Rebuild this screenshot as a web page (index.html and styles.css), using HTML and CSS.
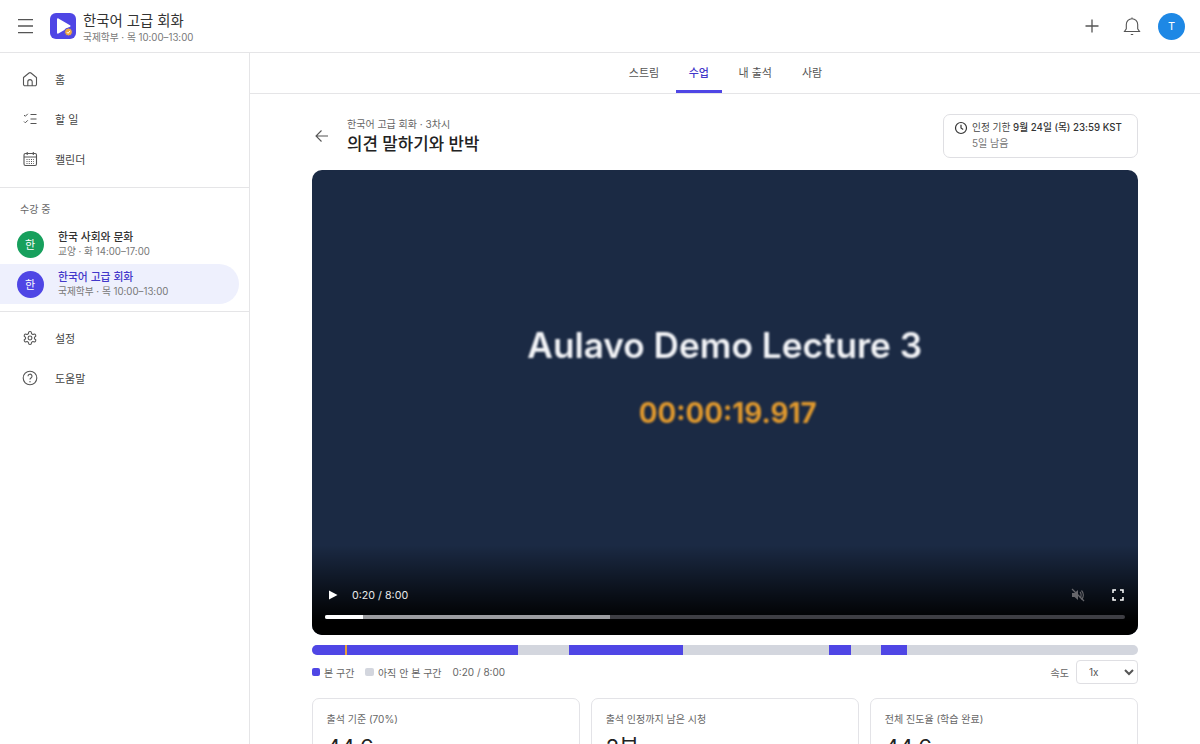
FILE: index.html
```html
<!DOCTYPE html>
<html lang="ko">
<head>
    <meta charset="UTF-8">
    <meta name="viewport" content="width=device-width, initial-scale=1.0">
    <title>의견 말하기와 반박</title>
    <link rel="stylesheet" href="styles.css">
</head>
<body>
    <header class="topbar">
        <button class="menu-btn" aria-label="메뉴">
            <svg width="24" height="24" viewBox="0 0 24 24" fill="none" stroke="#555" stroke-width="1.3"><path d="M5 5.600h15M5 12h15M5 18.600h15"/></svg>
        </button>
        <div class="logo">
            <svg width="26" height="26" viewBox="0 0 26 26">
                <rect width="26" height="26" rx="6" fill="#4f46e5"/>
                <path d="M7 6.200c0-.8.700-1.200 1.400-.8l11.600 6.800c.7.400.7 1.200 0 1.600L8.400 20.600c-.7.400-1.400 0-1.400-.8z" fill="#fff"/>
                <circle cx="18.500" cy="19" r="4" fill="#f0a93c" stroke="#4f46e5" stroke-width="1"/>
                <path d="m16.800 19.100 1.200 1.200 2.100-2.400" fill="none" stroke="#fff" stroke-width="1"/>
            </svg>
        </div>
        <div class="course-title">
            <div class="course-name">한국어 고급 회화</div>
            <div class="course-meta">국제학부 · 목 10:00–13:00</div>
        </div>
        <div class="top-actions">
            <svg width="24" height="24" viewBox="0 0 24 24" fill="none" stroke="#555" stroke-width="1.300"><path d="M12 5.500v13M5.500 12h13"/></svg>
            <svg width="24" height="24" viewBox="0 0 24 24" fill="none" stroke="#555" stroke-width="1.100"><path d="M4.500 17.500h15l-1.800-2.600v-4.400a5.700 5.700 0 0 0-11.400 0v4.400zM12 3.500v1.300M10.800 20.500h2.400"/></svg>
            <div class="avatar">T</div>
        </div>
    </header>

    <div class="layout">
        <nav class="sidebar">
            <div class="nav-group">
                <a class="nav-item">
                    <svg width="18" height="18" viewBox="0 0 18 18" fill="none" stroke="#555" stroke-width="1.100"><path d="M2.500 7.500 8 3a1.600 1.600 0 0 1 2 0l5.500 4.500v6.800a1.500 1.500 0 0 1-1.500 1.500H4a1.500 1.500 0 0 1-1.500-1.500zM6.800 15.800v-4a2.200 2.200 0 0 1 4.400 0v4"/></svg>
                    <span>홈</span>
                </a>
                <a class="nav-item">
                    <svg width="18" height="18" viewBox="0 0 18 18" fill="none" stroke="#555" stroke-width="1"><path d="m3 5 1.300 1.300L6.800 3.800M3 11.500l1.300 1.300 2.500-2.500M9.500 4.500h6M9.500 9h6M9.500 13.500h6"/></svg>
                    <span>할 일</span>
                </a>
                <a class="nav-item">
                    <svg width="18" height="18" viewBox="0 0 18 18" fill="none" stroke="#555" stroke-width="1.100"><rect x="3" y="3.500" width="12.500" height="12" rx="1.500"/><path d="M3 7h12.500M6.200 2v3M12.300 2v3"/><path d="M5.500 9.500h7.500M5.500 11.500h7.500M5.500 13.500h7.500" stroke-dasharray="1 1.250"/></svg>
                    <span>캘린더</span>
                </a>
            </div>
            <div class="nav-group enrolled">
                <div class="nav-label">수강 중</div>
                <a class="course-item">
                    <span class="course-badge badge-green">한</span>
                    <span class="course-text">
                        <b>한국 사회와 문화</b>
                        <small>교양 · 화 14:00–17:00</small>
                    </span>
                </a>
                <a class="course-item active">
                    <span class="course-badge badge-indigo">한</span>
                    <span class="course-text">
                        <b>한국어 고급 회화</b>
                        <small>국제학부 · 목 10:00–13:00</small>
                    </span>
                </a>
            </div>
            <div class="nav-group last">
                <a class="nav-item">
                    <svg width="18" height="18" viewBox="-2 -2 28 28" fill="none" stroke="#555" stroke-width="1.700"><circle cx="12" cy="12" r="3"/><path d="M12.220 2h-.44a2 2 0 0 0-2 2v.18a2 2 0 0 1-1 1.730l-.43.250a2 2 0 0 1-2 0l-.15-.08a2 2 0 0 0-2.730.730l-.22.380a2 2 0 0 0 .730 2.730l.15.100a2 2 0 0 1 1 1.720v.510a2 2 0 0 1-1 1.740l-.15.090a2 2 0 0 0-.730 2.730l.22.380a2 2 0 0 0 2.730.730l.15-.08a2 2 0 0 1 2 0l.43.250a2 2 0 0 1 1 1.730V20a2 2 0 0 0 2 2h.44a2 2 0 0 0 2-2v-.18a2 2 0 0 1 1-1.730l.43-.25a2 2 0 0 1 2 0l.15.08a2 2 0 0 0 2.730-.730l.22-.39a2 2 0 0 0-.730-2.730l-.15-.08a2 2 0 0 1-1-1.740v-.5a2 2 0 0 1 1-1.740l.15-.09a2 2 0 0 0 .730-2.730l-.22-.38a2 2 0 0 0-2.730-.730l-.15.08a2 2 0 0 1-2 0l-.43-.25a2 2 0 0 1-1-1.730V4a2 2 0 0 0-2-2z"/></svg>
                    <span>설정</span>
                </a>
                <a class="nav-item">
                    <svg width="18" height="18" viewBox="0 0 18 18" fill="none" stroke="#555" stroke-width="1.100"><circle cx="9" cy="9" r="6.800"/><path d="M7 7.200a2 2 0 1 1 3 1.700c-.7.400-1 .8-1 1.500"/><circle cx="9" cy="12.700" r=".7" fill="#555" stroke="none"/></svg>
                    <span>도움말</span>
                </a>
            </div>
        </nav>

        <div class="content">
            <div class="tabs">
                <a class="tab">스트림</a>
                <a class="tab tab-active">수업</a>
                <a class="tab">내 출석</a>
                <a class="tab">사람</a>
            </div>

            <main class="lesson">
                <div class="lesson-head">
                    <button class="back-btn" aria-label="뒤로">
                        <svg width="20" height="20" viewBox="0 0 20 20" fill="none" stroke="#555" stroke-width="1.100"><path d="M16 10H4M9.500 4.500 4 10l5.500 5.500"/></svg>
                    </button>
                    <div class="lesson-title">
                        <div class="crumb">한국어 고급 회화 · 3차시</div>
                        <h1>의견 말하기와 반박</h1>
                    </div>
                    <div class="deadline">
                        <div class="deadline-row">
                            <svg width="14" height="14" viewBox="0 0 14 14" fill="none" stroke="#333" stroke-width="1.200"><circle cx="7" cy="7" r="5.500"/><path d="M7 3.800V7l2.200 1.400"/></svg>
                            <span>인정 기한 <b>9월 24일 (목) 23:59 KST</b></span>
                        </div>
                        <div class="deadline-left">5일 남음</div>
                    </div>
                </div>

                <div class="video">
                    <div class="video-frame">
                        <div class="video-title">Aulavo Demo Lecture 3</div>
                        <div class="video-time">00:00:19.917</div>
                    </div>
                    <div class="video-controls">
                        <div class="control-row">
                            <svg width="12" height="12" viewBox="0 0 12 12"><path d="M2 1.500l8.500 4.500L2 10.500z" fill="#fff"/></svg>
                            <span class="control-time">0:20 / 8:00</span>
                            <svg class="mute-icon" width="16" height="16" viewBox="0 0 16 16" fill="#66666b"><path d="M2 6h2.500L8 3v10l-3.500-3H2z"/><path d="M10 5c1.500 1.500 1.500 4.500 0 6M11.500 3.500c2.500 2.500 2.500 6.500 0 9" fill="none" stroke="#66666b" stroke-width="1.100"/><path d="M2 2l12 12" stroke="#66666b" stroke-width="1.200"/></svg>
                            <svg class="full-icon" width="12" height="12" viewBox="0 0 12 12" fill="none" stroke="#fff" stroke-width="1.500"><path d="M1 4V1h3M8 1h3v3M11 8v3H8M4 11H1V8"/></svg>
                        </div>
                        <div class="timeline">
                            <div class="timeline-buffer" style="width: 35.7%"></div>
                            <div class="timeline-played" style="width: 4.7%"></div>
                        </div>
                    </div>
                </div>

                <div class="segments">
                    <div class="segment" style="left: 0; width: 24.95%"></div>
                    <div class="segment" style="left: 31.2%; width: 13.7%"></div>
                    <div class="segment" style="left: 62.6%; width: 2.65%"></div>
                    <div class="segment" style="left: 68.85%; width: 3.25%"></div>
                    <div class="marker" style="left: 4.05%"></div>
                </div>

                <div class="legend">
                    <span class="legend-item"><i class="swatch swatch-seen"></i>본 구간</span>
                    <span class="legend-item"><i class="swatch swatch-unseen"></i>아직 안 본 구간</span>
                    <span class="legend-time">0:20 / 8:00</span>
                    <label class="speed">속도
                        <select class="speed-select"><option>1x</option></select>
                    </label>
                </div>

                <div class="stats">
                    <div class="stat-card">
                        <div class="stat-label">출석 기준 (70%)</div>
                        <div class="stat-value">44.6</div>
                    </div>
                    <div class="stat-card">
                        <div class="stat-label">출석 인정까지 남은 시청</div>
                        <div class="stat-value">2분</div>
                    </div>
                    <div class="stat-card">
                        <div class="stat-label">전체 진도율 (학습 완료)</div>
                        <div class="stat-value">44.6</div>
                    </div>
                </div>
            </main>
        </div>
    </div>
</body>
</html>
```

FILE: styles.css
```css
* {
    box-sizing: border-box;
}

html, body {
    height: 100%;
}

body {
    margin: 0;
    overflow: hidden;
    font-family: Inter, "Noto Sans CJK KR", sans-serif;
    color: #222;
    background-color: #fff;
}

button {
    padding: 0;
    border: none;
    background: none;
    display: flex;
}

/* top bar */
.topbar {
    height: 53px;
    display: flex;
    align-items: center;
    padding: 0 15px 0 13px;
    border-bottom: 1px solid #e5e5e7;
}

.logo {
    display: flex;
    margin-left: 13px;
}

.course-title {
    margin-left: 7px;
    padding-top: 3px;
}

.course-name {
    font-size: 14.400px;
    line-height: 20px;
    color: #333;
}

.course-meta {
    font-size: 9.700px;
    line-height: 14px;
    color: #777;
}

.top-actions {
    margin-left: auto;
    display: flex;
    align-items: center;
    gap: 16px;
}

.avatar {
    width: 27px;
    height: 27px;
    border-radius: 50%;
    margin-left: -2px;
    background-color: #1e88e5;
    color: #fff;
    font-size: 11px;
    display: flex;
    align-items: center;
    justify-content: center;
}

.layout {
    display: flex;
    height: calc(100% - 53px);
}

/* sidebar */
.sidebar {
    width: 250px;
    flex-shrink: 0;
    border-right: 1px solid #e5e5e7;
}

.nav-group {
    padding: 6px 0 8px;
    border-bottom: 1px solid #e5e5e7;
}

.nav-group.last {
    padding-top: 6px;
    border-bottom: none;
}

.nav-item {
    height: 40px;
    display: flex;
    align-items: center;
    gap: 16px;
    padding-left: 21px;
    font-size: 11px;
    color: #444;
}

.nav-group.enrolled {
    padding: 13px 10px 7px 0;
}

.nav-label {
    padding-left: 20px;
    font-size: 10px;
    line-height: 16px;
    color: #666;
    margin-bottom: 7px;
}

.course-item {
    height: 40px;
    display: flex;
    align-items: center;
    gap: 14.500px;
    padding-left: 16.500px;
    border-radius: 0 20px 20px 0;
}

.course-item.active {
    background-color: #eef0fd;
}

.course-badge {
    width: 27px;
    height: 27px;
    border-radius: 50%;
    color: #fff;
    font-size: 11px;
    display: flex;
    align-items: center;
    justify-content: center;
}

.badge-green {
    background-color: #17a05d;
}

.badge-indigo {
    background-color: #4f46e5;
}

.course-text {
    display: flex;
    flex-direction: column;
}

.course-text b {
    font-size: 10.800px;
    font-weight: 500;
    line-height: 15px;
    color: #333;
}

.course-text small {
    font-size: 9.700px;
    line-height: 13px;
    color: #777;
}

.active .course-text b {
    color: #4338ca;
}

/* main column */
.content {
    flex: 1;
    min-width: 0;
}

.tabs {
    height: 41px;
    display: flex;
    justify-content: center;
    padding-left: 1px;
    border-bottom: 1px solid #e5e5e7;
}

.tab {
    display: flex;
    align-items: center;
    padding: 0 15px 3px;
    height: 40px;
    font-size: 11px;
    color: #555;
}

.tab-active {
    color: #4338ca;
    font-weight: 500;
    padding: 0 13px;
    margin: 0 1.500px;
    border-bottom: 3px solid #4f46e5;
}

.lesson {
    padding: 20px 62px 0 61.500px;
}

.lesson-head {
    display: flex;
    align-items: center;
    height: 44px;
    margin-bottom: 12px;
}

.lesson-title {
    margin-left: 15.500px;
    padding-top: 2px;
}

.crumb {
    font-size: 10px;
    line-height: 14px;
    color: #666;
}

h1 {
    margin: 0;
    font-size: 16.800px;
    line-height: 26px;
    font-weight: 500;
    color: #222;
}

.deadline {
    margin-left: auto;
    width: 195px;
    height: 44px;
    padding: 5px 10px;
    border: 1px solid #dfdfe3;
    border-radius: 7px;
}

.deadline-row {
    display: flex;
    align-items: center;
    gap: 4px;
    font-size: 9.700px;
    line-height: 16px;
    color: #444;
    white-space: nowrap;
}

.deadline-row b {
    font-weight: 500;
    color: #333;
}

.deadline-left {
    padding-left: 18px;
    font-size: 10px;
    line-height: 15px;
    color: #777;
}

/* video */
.video {
    height: 465px;
    border-radius: 10px;
    overflow: hidden;
    background-color: #1b2a44;
    position: relative;
    display: flex;
    flex-direction: column;
}

.video-frame {
    flex: 1;
    text-align: center;
    padding-top: 152px;
    filter: blur(1.100px);
}

.video-title {
    font-size: 35.200px;
    line-height: 46px;
    font-weight: 600;
    color: #f4f5f8;
}

.video-time {
    margin-top: 30px;
    padding-left: 6px;
    font-size: 27.800px;
    line-height: 30px;
    font-weight: 700;
    color: #e0992e;
}

.video-controls {
    position: absolute;
    left: 0;
    right: 0;
    bottom: 0;
    height: 90px;
    padding: 41px 13.500px 0;
    background: linear-gradient(to bottom, rgba(0,0,0,0), #000 85%);
}

.control-row {
    display: flex;
    align-items: center;
    height: 18px;
    padding: 0 1px 0 2px;
    color: #fff;
}

.control-time {
    margin-left: 13px;
    font-size: 10.700px;
    color: #e8e8e8;
}

.mute-icon {
    margin-left: auto;
    margin-right: 26px;
}

.timeline {
    margin-top: 11px;
    height: 3.500px;
    border-radius: 2px;
    background-color: #3e3e44;
    position: relative;
    overflow: hidden;
}

.timeline-buffer,
.timeline-played {
    position: absolute;
    left: 0;
    top: 0;
    height: 100%;
}

.timeline-buffer {
    background-color: #9c9ca0;
}

.timeline-played {
    background-color: #fff;
}

/* watched segments */
.segments {
    height: 10px;
    margin-top: 10px;
    border-radius: 6px;
    background-color: #d3d6de;
    position: relative;
    overflow: hidden;
}

.segment {
    position: absolute;
    top: 0;
    height: 100%;
    background-color: #4f46e5;
}

.marker {
    position: absolute;
    top: 0;
    width: 2px;
    height: 100%;
    background-color: #e9a13c;
}

.legend {
    display: flex;
    align-items: center;
    height: 26px;
    margin-top: 4px;
    font-size: 10px;
    color: #666;
}

.legend-item {
    display: flex;
    align-items: center;
    gap: 4px;
    margin-right: 11px;
}

.swatch {
    width: 8.500px;
    height: 8.500px;
    border-radius: 2px;
}

.swatch-seen {
    background-color: #4f46e5;
}

.swatch-unseen {
    background-color: #d3d6de;
}

.speed {
    margin-left: auto;
    display: flex;
    align-items: center;
    gap: 7px;
}

.speed-select {
    width: 62px;
    height: 24px;
    padding: 0 8px;
    border: 1px solid #dfdfe3;
    border-radius: 4px;
    background-color: #fff;
    font-family: inherit;
    font-size: 10px;
    color: #555;
}

/* stat cards */
.stats {
    display: grid;
    grid-template-columns: repeat(3, 1fr);
    gap: 11px;
    margin-top: 13px;
}

.stat-card {
    height: 100px;
    padding: 12px 14px;
    border: 1px solid #e3e3e7;
    border-radius: 7px;
}

.stat-label {
    font-size: 10px;
    line-height: 16px;
    color: #666;
}

.stat-value {
    margin-top: 5px;
    font-size: 22px;
    line-height: 30px;
    color: #222;
}
```
